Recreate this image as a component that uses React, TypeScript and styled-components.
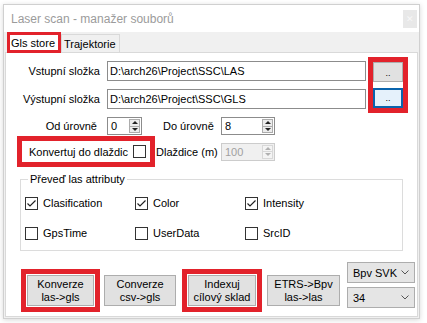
import React from 'react';
import styled, { createGlobalStyle } from 'styled-components';

const GlobalStyle = createGlobalStyle`
  html, body {
    margin: 0;
    padding: 0;
    background: #ffffff;
  }
  body {
    font-family: "Liberation Sans", Arial, sans-serif;
    font-size: 11px;
    color: #000;
  }
`;

const RED = '#e2222b';

const Page = styled.div`
  width: 427px;
  height: 323px;
  box-sizing: border-box;
  padding: 4px 7px 4px 3px;
`;

const Window = styled.div`
  width: 417px;
  height: 315px;
  box-sizing: border-box;
  border: 1px solid #d0d0d0;
  box-shadow: 0 1px 5px rgba(0, 0, 0, 0.16);
  background: #f0f0f0;
  display: flex;
  flex-direction: column;
`;

const TitleBar = styled.div`
  height: 27px;
  background: #ffffff;
  display: flex;
  align-items: center;
  justify-content: space-between;
  padding: 0 2px 0 7px;
`;

const Title = styled.span`
  font-size: 12px;
  color: #9b9b9b;
`;

const CloseBox = styled.div`
  width: 14px;
  height: 18px;
  background: #e8e8e8;
  display: flex;
  align-items: center;
  justify-content: center;
  color: #f7f7f7;
  font-size: 9px;
`;

const TabStrip = styled.div`
  height: 20px;
  display: flex;
  align-items: flex-end;
  padding-left: 3px;
  position: relative;
  z-index: 1;
`;

const Tab = styled.div<{ $active?: boolean }>`
  box-sizing: border-box;
  display: flex;
  align-items: center;
  white-space: nowrap;
  ${(p) =>
    p.$active
      ? `
    height: 21px;
    margin-bottom: -1px;
    border: 3px solid ${RED};
    background: #fff;
    padding: 0 3px 0 1px;
  `
      : `
    height: 18px;
    border: 1px solid #d9d9d9;
    border-bottom: none;
    background: #f0f0f0;
    padding: 0 3px 0 2px;
  `}
`;

const Panel = styled.div`
  flex: 1;
  margin: 0 1px 1px 1px;
  background: #ffffff;
  border: 1px solid #d9d9d9;
  display: flex;
  flex-direction: column;
  align-items: flex-start;
`;

const FolderSection = styled.div`
  display: flex;
  align-items: center;
  margin-top: 4px;
`;

const FolderRows = styled.div`
  display: flex;
  flex-direction: column;
  gap: 8px;
`;

const Row = styled.div`
  display: flex;
  align-items: center;
`;

const Label = styled.span<{ $w: number; $right?: boolean; $gap?: number; $lead?: number }>`
  width: ${(p) => p.$w}px;
  margin-right: ${(p) => p.$gap ?? 0}px;
  margin-left: ${(p) => p.$lead ?? 0}px;
  text-align: ${(p) => (p.$right ? 'right' : 'left')};
  white-space: nowrap;
`;

const TextBox = styled.div`
  width: 259px;
  height: 20px;
  box-sizing: border-box;
  border: 1px solid #8c8c8c;
  display: flex;
  align-items: center;
  padding-left: 2px;
  white-space: nowrap;
`;

const RedFrame = styled.div<{ $pad?: string }>`
  box-sizing: border-box;
  border: 5px solid ${RED};
  padding: ${(p) => p.$pad ?? '0'};
  background: #fff;
`;

const BrowseFrame = styled(RedFrame)`
  margin-left: 2px;
  display: flex;
  flex-direction: column;
  gap: 6px;
`;

const BrowseButton = styled.button<{ $focused?: boolean }>`
  width: 30px;
  height: 20px;
  box-sizing: border-box;
  padding: 0 0 3px 0;
  font: inherit;
  font-size: 9px;
  line-height: 1;
  display: flex;
  align-items: flex-end;
  justify-content: center;
  background: ${(p) => (p.$focused ? '#e5f1fb' : '#e1e1e1')};
  border: ${(p) => (p.$focused ? '2px solid #0a64ad' : '1px solid #adadad')};
  color: #000;
`;

const SpinRow = styled.div`
  display: flex;
  align-items: center;
  margin-top: 4px;
`;

const SpinBox = styled.div<{ $w: number; $disabled?: boolean }>`
  width: ${(p) => p.$w}px;
  height: 18px;
  box-sizing: border-box;
  border: 1px solid ${(p) => (p.$disabled ? '#cccccc' : '#8c8c8c')};
  background: ${(p) => (p.$disabled ? '#f0f0f0' : '#ffffff')};
  color: ${(p) => (p.$disabled ? '#a0a0a0' : '#000')};
  display: flex;
  align-items: center;
  justify-content: space-between;
  padding-left: 3px;
`;

const SpinButtons = styled.div<{ $disabled?: boolean }>`
  width: 11px;
  height: 14px;
  margin-right: 1px;
  box-sizing: border-box;
  border: 1px solid ${(p) => (p.$disabled ? '#d8d8d8' : '#acacac')};
  background: ${(p) => (p.$disabled ? '#f4f4f4' : '#ececec')};
  display: flex;
  flex-direction: column;
`;

const SpinHalf = styled.div<{ $down?: boolean; $disabled?: boolean }>`
  flex: 1;
  display: flex;
  align-items: center;
  justify-content: center;
  border-top: ${(p) => (p.$down ? `1px solid ${p.$disabled ? '#d8d8d8' : '#acacac'}` : 'none')};

  &::after {
    content: '';
    border-left: 3px solid transparent;
    border-right: 3px solid transparent;
    ${(p) =>
      p.$down
        ? `border-top: 3px solid ${p.$disabled ? '#b0b0b0' : '#222'};`
        : `border-bottom: 3px solid ${p.$disabled ? '#b0b0b0' : '#222'};`}
  }
`;

const TileRow = styled.div`
  display: flex;
  align-items: center;
  margin-top: 1px;
  margin-left: 11px;
`;

const TileFrame = styled(RedFrame)`
  width: 138px;
  height: 31px;
  display: flex;
  align-items: center;
  justify-content: space-between;
  padding: 0 4px 0 7px;
`;

const CheckSquare = styled.span`
  width: 13px;
  height: 13px;
  box-sizing: border-box;
  border: 1px solid #333;
  background: #fff;
  display: inline-flex;
  align-items: center;
  justify-content: center;
  flex-shrink: 0;
`;

const Group = styled.fieldset`
  margin: 6px 0 0 14px;
  width: 383px;
  box-sizing: border-box;
  border: 1px solid #dcdcdc;
  padding: 8px 0 8px 4px;
  display: grid;
  grid-template-columns: repeat(3, 110px);
  row-gap: 12px;
`;

const Legend = styled.legend`
  margin-left: 3px;
  padding: 0 2px;
  line-height: 13px;
  font-size: 11px;
`;

const CheckItem = styled.label`
  display: flex;
  align-items: center;
  gap: 5px;
  height: 18px;
  white-space: nowrap;
`;

const BottomRow = styled.div`
  display: flex;
  align-items: flex-start;
  margin-top: 11px;
  margin-left: 15px;
`;

const ActionFrame = styled(RedFrame)<{ $gap: number }>`
  margin-top: 7px;
  margin-left: ${(p) => p.$gap}px;
`;

const ActionButton = styled.button<{ $w: number; $plain?: boolean; $gap?: number }>`
  width: ${(p) => p.$w}px;
  height: 31px;
  box-sizing: border-box;
  margin-top: ${(p) => (p.$plain ? 13 : 0)}px;
  margin-left: ${(p) => p.$gap ?? 0}px;
  background: #e1e1e1;
  border: 1px solid #adadad;
  font: inherit;
  font-size: 11px;
  line-height: 13px;
  color: #000;
  padding: 0;
  text-align: center;
`;

const ComboColumn = styled.div`
  margin-left: 7px;
  display: flex;
  flex-direction: column;
  gap: 4px;
`;

const Combo = styled.div`
  width: 68px;
  height: 21px;
  box-sizing: border-box;
  background: #e5e5e5;
  border: 1px solid #adadad;
  display: flex;
  align-items: center;
  justify-content: space-between;
  padding: 0 5px 0 5px;
  white-space: nowrap;
`;

const Chevron = () => (
  <svg width="8" height="5" viewBox="0 0 8 5">
    <polyline points="0.5,0.5 4,4 7.5,0.5" fill="none" stroke="#555" strokeWidth="1" />
  </svg>
);

const Check = ({ checked }: { checked?: boolean }) => (
  <CheckSquare>
    {checked && (
      <svg width="11" height="11" viewBox="0 0 11 11">
        <polyline points="1.5,5.5 4,8 9.5,2.5" fill="none" stroke="#222" strokeWidth="1.2" />
      </svg>
    )}
  </CheckSquare>
);

const Spinner = ({ value, w, disabled }: { value: string; w: number; disabled?: boolean }) => (
  <SpinBox $w={w} $disabled={disabled}>
    <span>{value}</span>
    <SpinButtons $disabled={disabled}>
      <SpinHalf $disabled={disabled} />
      <SpinHalf $down $disabled={disabled} />
    </SpinButtons>
  </SpinBox>
);

const attributes = [
  { name: 'Clasification', checked: true },
  { name: 'Color', checked: true },
  { name: 'Intensity', checked: true },
  { name: 'GpsTime', checked: false },
  { name: 'UserData', checked: false },
  { name: 'SrcID', checked: false },
];

export default function App() {
  return (
    <>
      <GlobalStyle />
      <Page>
        <Window>
          <TitleBar>
            <Title>Laser scan - manažer souborů</Title>
            <CloseBox>✕</CloseBox>
          </TitleBar>
          <TabStrip>
            <Tab $active>Gls store</Tab>
            <Tab>Trajektorie</Tab>
          </TabStrip>
          <Panel>
            <FolderSection>
              <FolderRows>
                <Row>
                  <Label $w={94} $right $gap={7}>Vstupní složka</Label>
                  <TextBox>D:\arch26\Project\SSC\LAS</TextBox>
                </Row>
                <Row>
                  <Label $w={94} $right $gap={7}>Výstupní složka</Label>
                  <TextBox>D:\arch26\Project\SSC\GLS</TextBox>
                </Row>
              </FolderRows>
              <BrowseFrame>
                <BrowseButton>..</BrowseButton>
                <BrowseButton $focused>..</BrowseButton>
              </BrowseFrame>
            </FolderSection>

            <SpinRow>
              <Label $w={91} $right $gap={10}>Od úrovně</Label>
              <Spinner value="0" w={35} />
              <Label $w={58} $lead={21}>Do úrovně</Label>
              <Spinner value="8" w={54} />
            </SpinRow>

            <TileRow>
              <TileFrame>
                <span>Konvertuj do dlaždic</span>
                <Check />
              </TileFrame>
              <Label $w={65} $lead={1}>Dlaždice (m)</Label>
              <Spinner value="100" w={54} disabled />
            </TileRow>

            <Group>
              <Legend>Převeď las attributy</Legend>
              {attributes.map((a) => (
                <CheckItem key={a.name}>
                  <Check checked={a.checked} />
                  {a.name}
                </CheckItem>
              ))}
            </Group>

            <BottomRow>
              <ActionFrame $gap={0} $pad="1px">
                <ActionButton $w={67}>Konverze<br />las-&gt;gls</ActionButton>
              </ActionFrame>
              <ActionButton $w={72} $plain $gap={4}>Converze<br />csv-&gt;gls</ActionButton>
              <ActionFrame $gap={6} $pad="1px">
                <ActionButton $w={68}>Indexuj<br />cílový sklad</ActionButton>
              </ActionFrame>
              <ActionButton $w={73} $plain $gap={5}>ETRS-&gt;Bpv<br />las-&gt;las</ActionButton>
              <ComboColumn>
                <Combo>Bpv SVK<Chevron /></Combo>
                <Combo>34<Chevron /></Combo>
              </ComboColumn>
            </BottomRow>
          </Panel>
        </Window>
      </Page>
    </>
  );
}
